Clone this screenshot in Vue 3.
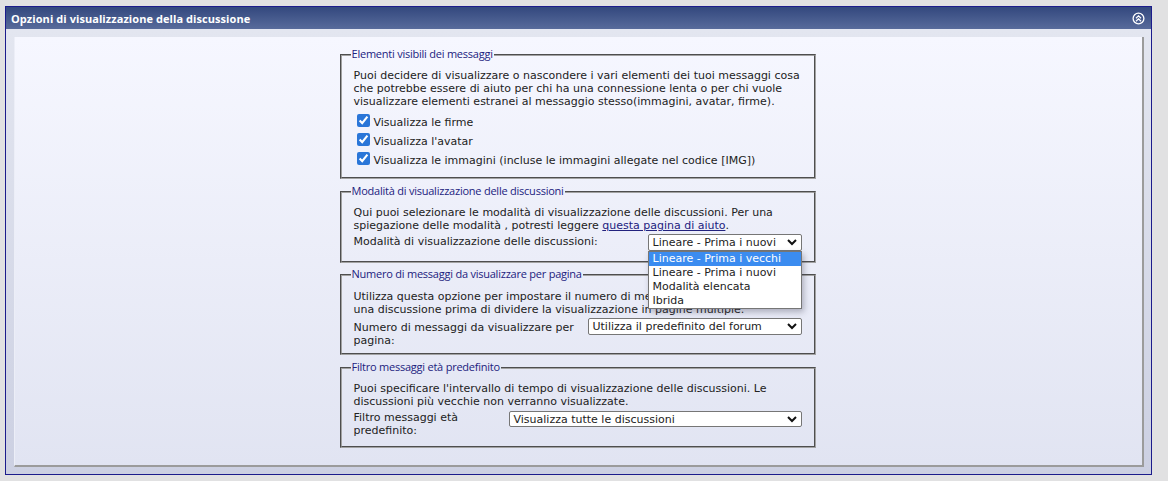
<script setup>
const checks = [
  'Visualizza le firme',
  "Visualizza l'avatar",
  'Visualizza le immagini (incluse le immagini allegate nel codice [IMG])'
]
const menu = ['Lineare - Prima i vecchi', 'Lineare - Prima i nuovi', 'Modalità elencata', 'Ibrida']
</script>

<template>
  <div class="page">
    <section class="panel">
      <header class="head">
        <h1>Opzioni di visualizzazione della discussione</h1>
        <svg class="collapse" width="13" height="13" viewBox="0 0 13 13" fill="none" stroke="#fff">
          <circle cx="6.5" cy="6.5" r="5.4" stroke-width="1.3" />
          <path d="M4 6.2 6.5 3.8 9 6.2M4 9.2 6.5 6.8 9 9.2" stroke-width="1.2" />
        </svg>
      </header>
      <div class="outer">
        <div class="inner">
          <div class="col">
            <fieldset class="f1">
              <legend>Elementi visibili dei messaggi</legend>
              <p>Puoi decidere di visualizzare o nascondere i vari elementi dei tuoi messaggi cosa che potrebbe essere di aiuto per chi ha una connessione lenta o per chi vuole visualizzare elementi estranei al messaggio stesso(immagini, avatar, firme).</p>
              <div class="checks">
                <label v-for="c in checks" :key="c" class="check">
                  <input type="checkbox" checked />
                  <span>{{ c }}</span>
                </label>
              </div>
            </fieldset>

            <fieldset class="f2">
              <legend>Modalità di visualizzazione delle discussioni</legend>
              <p>Qui puoi selezionare le modalità di visualizzazione delle discussioni. Per una spiegazione delle modalità , potresti leggere <a href="#">questa pagina di aiuto</a>.</p>
              <div class="row">
                <span class="lab">Modalità di visualizzazione delle discussioni:</span>
                <div class="sel w154">
                  <span>Lineare - Prima i nuovi</span>
                  <svg width="10" height="7" viewBox="0 0 10 7" fill="none" stroke="#111" stroke-width="2"><path d="M1 1l4 4 4-4" /></svg>
                  <ul class="menu">
                    <li v-for="(m, i) in menu" :key="m" :class="{ on: i === 0 }">{{ m }}</li>
                  </ul>
                </div>
              </div>
            </fieldset>

            <fieldset class="f3">
              <legend>Numero di messaggi da visualizzare per pagina</legend>
              <p>Utilizza questa opzione per impostare il numero di messaggi da visualizzare in una discussione prima di dividere la visualizzazione in pagine multiple.</p>
              <div class="row">
                <span class="lab">Numero di messaggi da visualizzare per pagina:</span>
                <div class="sel w214">
                  <span>Utilizza il predefinito del forum</span>
                  <svg width="10" height="7" viewBox="0 0 10 7" fill="none" stroke="#111" stroke-width="2"><path d="M1 1l4 4 4-4" /></svg>
                </div>
              </div>
            </fieldset>

            <fieldset class="f4">
              <legend>Filtro messaggi età predefinito</legend>
              <p>Puoi specificare l'intervallo di tempo di visualizzazione delle discussioni. Le discussioni più vecchie non verranno visualizzate.</p>
              <div class="row">
                <span class="lab">Filtro messaggi età predefinito:</span>
                <div class="sel w293">
                  <span>Visualizza tutte le discussioni</span>
                  <svg width="10" height="7" viewBox="0 0 10 7" fill="none" stroke="#111" stroke-width="2"><path d="M1 1l4 4 4-4" /></svg>
                </div>
              </div>
            </fieldset>
          </div>
        </div>
      </div>
    </section>
  </div>
</template>

<style>
html, body { margin: 0; background: #e1e1e2; }
</style>

<style scoped>
.page {
  box-sizing: border-box;
  width: 1168px;
  height: 481px;
  padding: 6px 16px 0 5px;
  background: #e1e1e2;
  font: 11px/13px "DejaVu Sans", Verdana, sans-serif;
  color: #222;
  overflow: hidden;
}
.panel {
  box-sizing: border-box;
  height: 469px;
  border: 1px solid #1c1c8c;
  display: flex;
  flex-direction: column;
}
.head {
  height: 22px;
  flex: none;
  display: flex;
  align-items: center;
  justify-content: space-between;
  padding: 0 6px 0 5px;
  box-sizing: border-box;
  background: linear-gradient(#33487e, #586b9b);
}
h1 {
  margin: 1px 0 0;
  color: #fff;
  font: bold 11px/13px "Open Sans", Tahoma, sans-serif;
  letter-spacing: 0.07px;
}
.outer {
  flex: 1;
  min-height: 0;
  padding: 8px 7px 7px 8px;
  background: linear-gradient(#e3e6f0, #ccd0e2);
  display: flex;
}
.inner {
  flex: 1;
  box-sizing: border-box;
  background: linear-gradient(#f6f7ff, #e1e4f2);
  border-right: 2px solid #9b9b9b;
  border-bottom: 2px solid #9b9b9b;
  border-left: 1px solid #eceef7;
  padding: 10px 2px 0 0;
  display: flex;
  justify-content: center;
}
.col {
  width: 476px;
  display: flex;
  flex-direction: column;
}
fieldset {
  margin: 0;
  padding: 0 12px;
  box-sizing: border-box;
  border: 2px groove #a2a2a2;
  min-width: 0;
}
.f1 { height: 132px; }
.f2 { height: 79px; margin-top: 5px; }
.f3 { height: 88px; margin-top: 4px; }
.f4 { height: 88px; margin-top: 5px; }
legend {
  padding: 0 1px 2px;
  margin-left: -3px;
  font: 11px/13px "Open Sans", Tahoma, sans-serif;
  color: #22227e;
  letter-spacing: -0.23px;
}
p { margin: 7px 0 0; }
.f3 p { margin-top: 8px; }
a { color: #22227e; text-decoration: underline; }
.checks { margin-top: 4px; display: flex; flex-direction: column; }
.check { display: flex; align-items: center; height: 19px; margin-left: 3px; }
.check input { width: 13px; height: 13px; margin: 0 4px 3px 0; accent-color: #2a76d8; }
.check span { margin-top: 2px; }
.row { display: flex; justify-content: space-between; align-items: flex-start; }
.f2 .lab, .f4 .lab { margin-top: 3px; }
.f3 .lab { margin-top: 5px; width: 232px; }
.f4 .lab { width: 150px; }
.sel {
  position: relative;
  box-sizing: border-box;
  height: 17px;
  border: 1px solid #767676;
  border-radius: 2px;
  background: #fff;
  display: flex;
  align-items: center;
  justify-content: space-between;
  padding: 0 4px;
  color: #222;
}
.w154 { width: 154px; margin-top: 2px; }
.w214 { width: 214px; margin-top: 2px; }
.w293 { width: 293px; margin-top: 3px; height: 16px; }
.menu {
  position: absolute;
  left: -1px;
  top: 16px;
  width: 154px;
  box-sizing: border-box;
  margin: 0;
  padding: 0;
  list-style: none;
  background: #fff;
  border: 1px solid #767676;
  box-shadow: 2px 3px 6px rgba(60, 60, 80, 0.35);
  z-index: 5;
}
.menu li { height: 14px; line-height: 14px; padding-left: 4px; }
.menu li.on { background: #3b8cf0; color: #fff; }
</style>
